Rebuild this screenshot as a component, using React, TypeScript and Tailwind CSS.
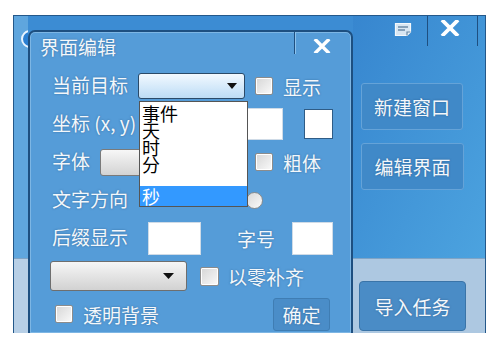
import React from "react";

const txt =
  "text-[19px] leading-[19px] whitespace-nowrap text-[#f3f7fb] [text-shadow:0_0_2px_rgba(20,60,100,0.5)]";

const Check = ({ className = "" }: { className?: string }) => (
  <div
    className={`w-[18px] h-[18px] shrink-0 rounded-[2px] border border-[#8c8c8c] bg-gradient-to-br from-[#d6d6d6] to-[#fafafa] shadow-[inset_0_0_0_1px_#ffffff] ${className}`}
  />
);

const CloseX = ({ size = 18 }: { size?: number }) => (
  <svg width={size} height={size * 0.8} viewBox="0 0 18 14">
    <path d="M3 1 L15 13 M15 1 L3 13" stroke="#ffffff" strokeWidth="3.4" strokeLinecap="square" />
  </svg>
);

const SideButton = ({ label, className = "" }: { label: string; className?: string }) => (
  <div
    className={`flex items-center justify-center rounded-[3px] border border-[#65a3d8] bg-[#4089c8] ${txt} ${className}`}
  >
    {label}
  </div>
);

export default function App() {
  return (
    <div className="w-[500px] h-[353px] bg-white pt-[15px] pl-[13px] overflow-hidden font-['Noto_Sans_CJK_SC','Liberation_Sans',sans-serif]">
      {/* outer window */}
      <div className="flex w-[473px] h-[318px] border-l border-t border-r border-[#24588a] bg-[#3c8cd3]">
        {/* left strip */}
        <div className="w-[14px] flex flex-col">
          <div className="h-[242px] bg-[#5fa6de] pt-[14px]">
            <svg width="14" height="18" viewBox="0 0 14 18">
              <circle cx="16" cy="9" r="8" fill="#2a7fd2" stroke="#e8f4ff" strokeWidth="2" />
            </svg>
          </div>
          <div className="flex-1 border-t border-[#7fa4c6] bg-[#b7cfe6]" />
        </div>

        {/* child dialog */}
        <div className="relative mt-[14px] w-[325px] h-[303px] border-2 border-b-0 border-[#1d4f80] rounded-t-[7px] bg-[#559cd8] shadow-[inset_0_0_0_1px_#7db6e4]">
          {/* title bar */}
          <div className="flex items-start h-[35px] pl-[10px] pt-[5px]">
            <span className={txt}>界面编辑</span>
            <div className="ml-auto flex h-[22px] -mt-[5px]">
              <div className="w-[1px] h-[22px] bg-[#1f4f80] shadow-[1px_0_0_#8cc2ec]" />
              <div className="w-[56px] flex items-center justify-center pt-[6px] pr-[2px]">
                <CloseX />
              </div>
            </div>
          </div>

          <div className="pl-[22px]">
            {/* row 1 */}
            <div className="flex items-center h-[38px]">
              <div className="w-[86px]">
                <span className={txt}>当前目标</span>
              </div>
              <div className="relative w-[107px] h-[26px] rounded-[3px] border border-[#2b4a68] bg-gradient-to-b from-[#f2f9ff] to-[#bcdcf5] flex items-center justify-end pr-[7px]">
                <svg width="10" height="6" viewBox="0 0 10 6">
                  <path d="M0 0 H10 L5 6 Z" fill="#111111" />
                </svg>
                {/* open dropdown list */}
                <div className="absolute left-0 top-full mt-[3px] z-10 w-[109px] h-[106px] bg-white border border-[#555555] pt-[3px] text-[18px] leading-[17px] text-black">
                  <div className="h-[17px] pl-[2px]">事件</div>
                  <div className="h-[17px] pl-[2px]">天</div>
                  <div className="h-[17px] pl-[2px]">时</div>
                  <div className="h-[17px] pl-[2px]">分</div>
                  <div className="h-[13px]" />
                  <div className="h-[20px] pl-[2px] bg-[#3399ff] text-white leading-[20px]">秒</div>
                </div>
              </div>
              <Check className="ml-[10px]" />
              <span className={`ml-[10px] ${txt}`}>显示</span>
            </div>

            {/* row 2 */}
            <div className="flex items-center h-[38px]">
              <div className="w-[188px]">
                <span className={txt}>坐标 (x, y)</span>
              </div>
              <div className="w-[43px] h-[32px] bg-white border border-[#cfdbe7]" />
              <div className="ml-[21px] w-[29px] h-[30px] bg-white border border-[#2f5c86]" />
            </div>

            {/* row 3 */}
            <div className="flex items-center h-[38px]">
              <div className="w-[48px]">
                <span className={txt}>字体</span>
              </div>
              <div className="w-[145px] h-[27px] rounded-[3px] border border-[#7a7a7a] bg-gradient-to-b from-[#f7f7f7] to-[#d3d3d3]" />
              <Check className="ml-[10px]" />
              <span className={`ml-[10px] ${txt}`}>粗体</span>
            </div>

            {/* row 4 */}
            <div className="flex items-center h-[38px]">
              <div className="w-[194px]">
                <span className={txt}>文字方向</span>
              </div>
              <div className="w-[17px] h-[17px] rounded-full border border-[#8c8c8c] bg-gradient-to-br from-[#d8d8d8] to-[#fafafa]" />
            </div>

            {/* row 5 */}
            <div className="flex items-center h-[38px]">
              <div className="w-[96px]">
                <span className={txt}>后缀显示</span>
              </div>
              <div className="w-[53px] h-[33px] bg-white border border-[#cfdbe7]" />
              <span className={`ml-[36px] w-[55px] ${txt}`}>字号</span>
              <div className="w-[41px] h-[33px] bg-white border border-[#cfdbe7]" />
            </div>

            {/* row 6 */}
            <div className="flex items-center h-[38px] -ml-[2px]">
              <div className="w-[137px] h-[30px] rounded-[3px] border border-[#6e6e6e] bg-gradient-to-b from-[#f6f6f6] to-[#d2d2d2] flex items-center justify-end pr-[12px]">
                <svg width="11" height="6" viewBox="0 0 11 6">
                  <path d="M0 0 H11 L5.5 6 Z" fill="#111111" />
                </svg>
              </div>
              <Check className="ml-[13px] w-[19px] h-[19px]" />
              <span className={`ml-[9px] ${txt}`}>以零补齐</span>
            </div>

            {/* row 7 */}
            <div className="flex items-center h-[38px] pr-[21px]">
              <Check className="ml-[3px]" />
              <span className={`ml-[10px] ${txt}`}>透明背景</span>
              <div
                className={`ml-auto w-[57px] h-[33px] flex items-center justify-center rounded-[3px] border border-[#3f7db3] bg-[#4a8dc8] ${txt}`}
              >
                确定
              </div>
            </div>
          </div>
        </div>

        {/* right column */}
        <div className="flex-1 flex flex-col">
          <div className="h-[242px] bg-gradient-to-br from-[#3786cf] to-[#4ca3df]">
            <div className="flex h-[30px]">
              <div className="w-[25px]" />
              <div className="w-[50px] flex items-center justify-center pb-[4px] border-r border-[#1f4f80]">
                <svg width="18" height="15" viewBox="0 0 18 15">
                  <path d="M1.5 1.5 H16.5 V10 L13 13.5 H1.5 Z" fill="#d8e6f2" stroke="#f4f8fb" strokeWidth="1.2" />
                  <path d="M4 5 H14 M4 8 H11" stroke="#6b8aa6" strokeWidth="1.5" />
                  <path d="M13 13.5 V10 H16.5" fill="none" stroke="#6b8aa6" strokeWidth="1.2" />
                </svg>
              </div>
              <div className="w-[50px] flex items-center justify-center pr-[6px] pb-[6px] border-r border-[#1f4f80]">
                <CloseX size={20} />
              </div>
            </div>
            <SideButton label="新建窗口" className="ml-[8px] mt-[37px] w-[102px] h-[47px]" />
            <SideButton label="编辑界面" className="ml-[8px] mt-[13px] w-[103px] h-[47px]" />
          </div>
          <div className="flex-1 border-t border-[#7fa4c6] bg-[#adc8e1] pt-[22px] pl-[6px]">
            <div
              className={`flex items-center justify-center w-[107px] h-[50px] rounded-[4px] border border-[#3a74a8] bg-[#4a8cc6] ${txt}`}
            >
              导入任务
            </div>
          </div>
        </div>
      </div>
    </div>
  );
}
